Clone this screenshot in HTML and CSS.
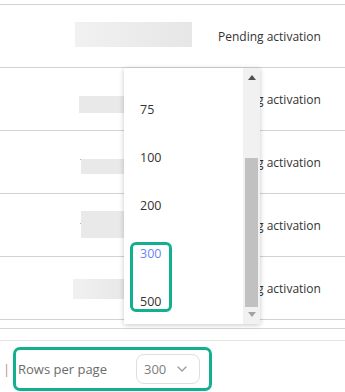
FILE: index.html
```html
<!DOCTYPE html>
<html>
<head>
<meta charset="utf-8">
<link rel="stylesheet" href="styles.css">
</head>
<body>
<div class="page">
  <div class="table">
    <div class="row">
      <div class="id-cell"><span class="skel skel-a" style="margin-left:75px;width:117px;height:25px;margin-top:-3px"></span></div>
      <div class="status">Pending activation</div>
    </div>
    <div class="row">
      <div class="id-cell"><span class="skel" style="margin-left:79px;width:60px;height:17px;margin-top:10px"></span></div>
      <div class="status">Pending activation</div>
    </div>
    <div class="row">
      <div class="id-cell"><span class="mark" style="margin-left:80px;margin-top:-6px"></span><span class="skel" style="margin-left:-1px;width:60px;height:15px;margin-top:8px"></span></div>
      <div class="status">Pending activation</div>
    </div>
    <div class="row">
      <div class="id-cell"><span class="mark" style="margin-left:80px;margin-top:-3px"></span><span class="skel" style="margin-left:-1px;width:60px;height:27px;margin-top:-2px"></span></div>
      <div class="status">Pending activation</div>
    </div>
    <div class="row">
      <div class="id-cell"><span class="skel skel-a" style="margin-left:73px;width:60px;height:20px;margin-top:1px"></span></div>
      <div class="status">Pending activation</div>
    </div>
  </div>
  <div class="spacer spacer-1"></div>
  <div class="spacer spacer-2"></div>
  <div class="pager">
    <span class="pipe">|</span>
    <div class="rpp">
      <span class="rpp-label">Rows per page</span>
      <div class="select">
        <span>300</span>
        <svg class="chev" width="10" height="6" viewBox="0 0 10 6"><path d="M1 1 L5 5 L9 1" fill="none" stroke="#9a9a9a" stroke-width="1.3" stroke-linecap="round" stroke-linejoin="round"/></svg>
      </div>
    </div>
  </div>

  <div class="dropdown">
    <ul class="opts">
      <li>75</li>
      <li>100</li>
      <li>200</li>
      <li class="sel">300</li>
      <li>500</li>
    </ul>
    <div class="hl"></div>
    <div class="sb">
      <svg class="sb-up" width="8" height="5" viewBox="0 0 8 5"><path d="M0 5 L4 0 L8 5 Z" fill="#505050"/></svg>
      <div class="thumb"></div>
      <svg class="sb-down" width="8" height="5" viewBox="0 0 8 5"><path d="M0 0 L8 0 L4 5 Z" fill="#a3a3a3"/></svg>
    </div>
  </div>
</div>
</body>
</html>
```

FILE: styles.css
```css
* { box-sizing: border-box; }
html, body {
  margin: 0;
  padding: 0;
  background: #ffffff;
  font-family: "Open Sans", "Liberation Sans", sans-serif;
  color: #333333;
}
.page {
  position: relative;
  width: 345px;
  height: 392px;
  overflow: hidden;
}
.table {
  margin-top: 4px;
  border-top: 1px solid #d2d2d2;
}
.row {
  display: grid;
  grid-template-columns: 218px 1fr;
  align-items: center;
  height: 63px;
  border-bottom: 1px solid #d2d2d2;
}
.id-cell {
  display: flex;
  align-items: center;
}
.skel {
  display: block;
  background: #e9e9e9;
}
.skel-a {
  background: linear-gradient(90deg, #f1f1f1 0%, #e6e6e6 100%);
}
.mark {
  display: block;
  width: 2px;
  height: 1px;
  background: #f3a94a;
}
.status {
  font-size: 12px;
  white-space: nowrap;
  color: #333333;
}
.spacer-1 {
  height: 9px;
  border-bottom: 1px solid #d6d6d6;
}
.spacer-2 {
  height: 12px;
  border-bottom: 1px solid #e4e4e4;
}
.pager {
  display: flex;
  align-items: center;
  padding-top: 6px;
}
.pipe {
  width: 13px;
  padding-left: 3px;
  font-size: 13px;
  color: #c08a8a;
}
.rpp {
  display: flex;
  align-items: center;
  justify-content: space-between;
  width: 199px;
  height: 44px;
  border: 3px solid #12b08e;
  border-radius: 7px;
  padding: 0 9px 0 2px;
}
.rpp-label {
  font-size: 13px;
  color: #6b6b6b;
}
.select {
  display: flex;
  align-items: center;
  justify-content: space-between;
  width: 64px;
  height: 30px;
  border: 1px solid #dedede;
  border-radius: 8px;
  padding: 0 12px 0 7px;
  font-size: 13px;
  color: #7d7d7d;
}
.dropdown {
  position: absolute;
  left: 124px;
  top: 68px;
  width: 136px;
  height: 256px;
  background: #ffffff;
  box-shadow: 0 1px 5px rgba(0, 0, 0, 0.22);
  overflow: hidden;
}
.opts {
  list-style: none;
  margin: 0;
  padding: 18px 0 0 0;
}
.opts li {
  height: 48px;
  line-height: 48px;
  padding-left: 16px;
  font-size: 12.5px;
  color: #333333;
}
.opts li.sel {
  color: #6a84f5;
}
.hl {
  position: absolute;
  left: 6px;
  top: 174px;
  width: 42px;
  height: 70px;
  border: 3px solid #12b08e;
  border-radius: 6px;
}
.sb {
  position: absolute;
  left: 119px;
  top: 0;
  width: 17px;
  height: 100%;
  background: #f1f1f1;
}
.sb-up {
  position: absolute;
  left: 5px;
  top: 7px;
}
.sb-down {
  position: absolute;
  left: 5px;
  top: 244px;
}
.thumb {
  position: absolute;
  left: 2px;
  top: 90px;
  width: 13px;
  height: 149px;
  background: #c1c1c1;
}
```
